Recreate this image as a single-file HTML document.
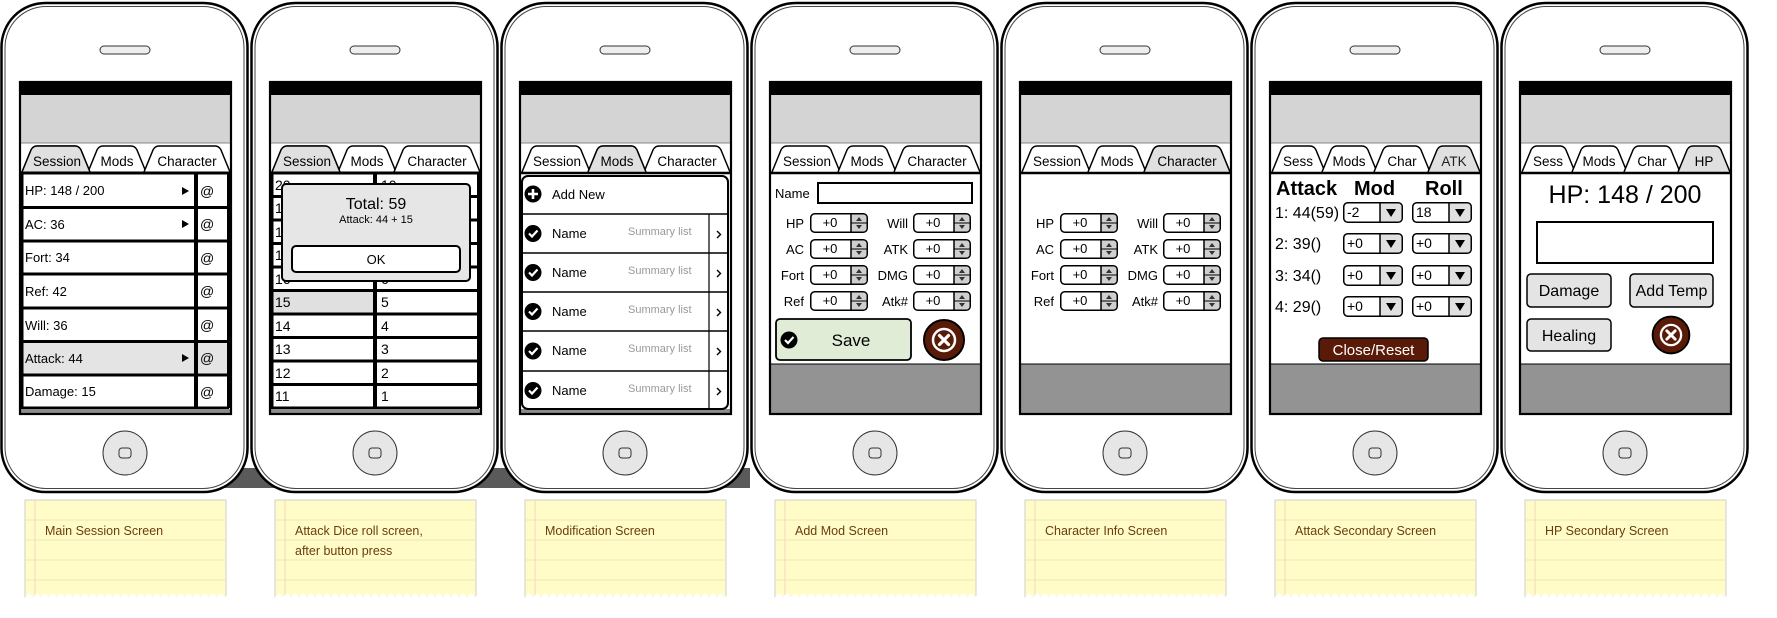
<!DOCTYPE html>
<html><head><meta charset="utf-8"><style>
html,body{margin:0;padding:0;background:#fff;width:1777px;height:618px;overflow:hidden}
svg{display:block;font-family:"Liberation Sans",Arial,sans-serif}
</style></head><body>
<svg width="1777" height="618" viewBox="0 0 1777 618" xmlns="http://www.w3.org/2000/svg">
<defs>
<symbol id="phone" overflow="visible">
<rect x="1.5" y="3" width="246" height="489" rx="44" fill="#fff" stroke="#000" stroke-width="2.5"/>
<rect x="5" y="6.5" width="239" height="482" rx="41" fill="none" stroke="#444" stroke-width="1"/>
<rect x="100" y="46" width="50" height="8" rx="4" fill="#eee" stroke="#333" stroke-width="1"/>
<rect x="19" y="81" width="213" height="333" fill="#fff"/>
<rect x="19" y="81" width="213" height="14" fill="#000"/>
<rect x="21" y="95" width="209" height="48" fill="#d4d4d4"/>
<line x1="21" y1="143" x2="230" y2="143" stroke="#888" stroke-width="1"/>
<ellipse cx="125" cy="453" rx="22" ry="22" fill="#e6e6e6" stroke="#333" stroke-width="1"/>
<rect x="119" y="448" width="12" height="10" rx="3" fill="none" stroke="#333" stroke-width="1"/>
</symbol>
<symbol id="spin" overflow="visible">
<rect x="0.75" y="0.75" width="56.5" height="18.5" rx="4" fill="#fff" stroke="#000" stroke-width="1.5"/>
<path d="M41 1.5 H53 a3.5 3.5 0 0 1 3.5 3.5 V15 a3.5 3.5 0 0 1 -3.5 3.5 H41 Z" fill="#cfcfcf"/>
<line x1="41" y1="1" x2="41" y2="19" stroke="#000" stroke-width="1.5"/>
<line x1="41" y1="10" x2="57" y2="10" stroke="#000" stroke-width="1"/>
<polygon points="46,8 52,8 49,4" fill="#333"/>
<polygon points="46,12 52,12 49,16" fill="#333"/>
</symbol>
<symbol id="dd" overflow="visible">
<rect x="0.75" y="0.75" width="58.5" height="19.5" rx="4" fill="#fff" stroke="#000" stroke-width="1.5"/>
<path d="M37 1.5 H55 a3.5 3.5 0 0 1 3.5 3.5 V16 a3.5 3.5 0 0 1 -3.5 3.5 H37 Z" fill="#e0e0e0"/>
<line x1="37" y1="1" x2="37" y2="20" stroke="#000" stroke-width="1.5"/>
<polygon points="43,7 53,7 48,15" fill="#000"/>
</symbol>
<symbol id="cancel" overflow="visible">
<circle cx="0" cy="0" r="20" fill="#5a1a08" stroke="#000" stroke-width="2"/>
<circle cx="0" cy="0" r="11" fill="none" stroke="#fff" stroke-width="2.5"/>
<path d="M-4.5 -4.5 L4.5 4.5 M4.5 -4.5 L-4.5 4.5" stroke="#fff" stroke-width="3.2" stroke-linecap="round"/>
</symbol>
<symbol id="chk" overflow="visible">
<circle cx="0" cy="0" r="8.5" fill="#000"/>
<path d="M-4 0 L-1 3 L4.5 -3" fill="none" stroke="#fff" stroke-width="2.2"/>
</symbol>
<symbol id="tabs3" overflow="visible">
<path d="M22 172 L31 150 Q33 146 37 146 L75 146 Q79 146 81 150 L90 172" fill="#fff" stroke="#000" stroke-width="1.5"/>
<path d="M88 172 L97 150 Q99 146 103 146 L131 146 Q135 146 137 150 L146 172" fill="#fff" stroke="#000" stroke-width="1.5"/>
<path d="M144 172 L153 150 Q155 146 159 146 L215 146 Q219 146 221 150 L230 172" fill="#fff" stroke="#000" stroke-width="1.5"/>
</symbol>
<symbol id="tabs4" overflow="visible">
<path d="M22 172 L31 150 Q33 146 37 146 L60 146 Q64 146 66 150 L75 172" fill="#fff" stroke="#000" stroke-width="1.5"/>
<path d="M72 172 L81 150 Q83 146 87 146 L112 146 Q116 146 118 150 L127 172" fill="#fff" stroke="#000" stroke-width="1.5"/>
<path d="M124 172 L133 150 Q135 146 139 146 L165 146 Q169 146 171 150 L180 172" fill="#fff" stroke="#000" stroke-width="1.5"/>
<path d="M178 172 L187 150 Q189 146 193 146 L215 146 Q219 146 221 150 L230 172" fill="#e0e0e0" stroke="#000" stroke-width="1.5"/>
</symbol>
<symbol id="note" overflow="visible">
<rect x="0" y="0" width="201" height="97" fill="#fffcc8" stroke="#cfcfcf" stroke-width="1"/>
<path d="M0 20 H201 M0 40 H201 M0 60 H201 M0 80 H201" stroke="#ece6b4" stroke-width="1"/>
<line x1="10" y1="0" x2="10" y2="97" stroke="#f3d8c0" stroke-width="1"/>
<path d="M0 97 l4 -4 l4 4 l4 -4 l4 4 l4 -4 l4 4 l4 -4 l4 4 l4 -4 l4 4 l4 -4 l4 4 l4 -4 l4 4 l4 -4 l4 4 l4 -4 l4 4 l4 -4 l4 4 l4 -4 l4 4 l4 -4 l4 4 l4 -4 l4 4 l4 -4 l4 4 l4 -4 l4 4 l4 -4 l4 4 l4 -4 l4 4 l4 -4 l4 4 l4 -4 l4 4 l4 -4 l4 4 l4 -4 l4 4 l4 -4 l4 4 l4 -4 l4 4 l4 -4 l4 4 l4 -4 l4 4 l4 -4 l1 1 V100 H0Z" fill="#fff"/>
</symbol>
</defs>

<rect x="210" y="468" width="540" height="20" fill="#5a5a5a"/>

<!-- PHONE 1 -->
<g transform="translate(0,0)">
<use href="#phone"/>
<use href="#tabs3"/>
<path d="M22 172 L31 150 Q33 146 37 146 L75 146 Q79 146 81 150 L90 172" fill="#e0e0e0" stroke="#000" stroke-width="1.5"/>
<g font-size="13.5" text-anchor="middle"><text x="57" y="166">Session</text><text x="117" y="166">Mods</text><text x="187" y="166">Character</text></g>
<rect x="21" y="341.5" width="208" height="33.5" fill="#e4e4e4"/>
<g stroke="#000" stroke-width="3">
<path d="M19 173 H232 M21 207.5 H229 M21 241 H229 M21 274 H229 M21 308 H229 M21 341.5 H229 M21 375 H229 M21 408 H229"/>
<path d="M22 173 V408 M228.5 173 V408"/>
</g>
<line x1="196" y1="173" x2="196" y2="408" stroke="#000" stroke-width="4"/>
<rect x="21" y="409" width="209" height="5" fill="#8c8c8c"/>
<g font-size="13">
<text x="25" y="195">HP: 148 / 200</text><text x="25" y="229">AC: 36</text><text x="25" y="262">Fort: 34</text><text x="25" y="296">Ref: 42</text><text x="25" y="330">Will: 36</text><text x="25" y="363">Attack: 44</text><text x="25" y="396">Damage: 15</text>
</g>
<g fill="#000"><polygon points="182,187 189,191 182,195"/><polygon points="182,220 189,224 182,228"/><polygon points="182,354 189,358 182,362"/></g>
<g font-size="14"><text x="200" y="196">@</text><text x="200" y="229">@</text><text x="200" y="263">@</text><text x="200" y="296">@</text><text x="200" y="330">@</text><text x="200" y="363">@</text><text x="200" y="397">@</text></g>
<use href="#note" x="25" y="500"/>
<text x="45" y="535" font-size="12.5" fill="#6b3d0e">Main Session Screen</text>
</g>

<!-- PHONE 2 -->
<g transform="translate(250,0)">
<use href="#phone"/>
<use href="#tabs3"/>
<path d="M22 172 L31 150 Q33 146 37 146 L75 146 Q79 146 81 150 L90 172" fill="#e0e0e0" stroke="#000" stroke-width="1.5"/>
<g font-size="13.5" text-anchor="middle"><text x="57" y="166">Session</text><text x="117" y="166">Mods</text><text x="187" y="166">Character</text></g>
<rect x="21" y="290.5" width="104" height="23.5" fill="#e0e0e0"/>
<g stroke="#000" stroke-width="3">
<path d="M19 173 H232 M21 196.5 H229 M21 220 H229 M21 243.5 H229 M21 267 H229 M21 290.5 H229 M21 314 H229 M21 337.5 H229 M21 361 H229 M21 384.5 H229 M21 408 H229"/>
<path d="M22 173 V408 M228.5 173 V408"/>
</g>
<line x1="125" y1="173" x2="125" y2="408" stroke="#000" stroke-width="4"/>
<rect x="21" y="409" width="209" height="5" fill="#8c8c8c"/>
<g font-size="14">
<text x="25" y="190">20</text><text x="25" y="213">19</text><text x="25" y="237">18</text><text x="25" y="260">17</text><text x="25" y="284">16</text><text x="25" y="307">15</text><text x="25" y="331">14</text><text x="25" y="354">13</text><text x="25" y="378">12</text><text x="25" y="401">11</text>
<text x="131" y="190">10</text><text x="131" y="213">9</text><text x="131" y="237">8</text><text x="131" y="260">7</text><text x="131" y="284">6</text><text x="131" y="307">5</text><text x="131" y="331">4</text><text x="131" y="354">3</text><text x="131" y="378">2</text><text x="131" y="401">1</text>
</g>
<rect x="32" y="184" width="188" height="97" rx="4" fill="#e6e6e6" stroke="#000" stroke-width="2"/>
<text x="126" y="209" font-size="16" text-anchor="middle">Total: 59</text>
<text x="126" y="223" font-size="11" text-anchor="middle">Attack: 44 + 15</text>
<rect x="42" y="246" width="168" height="26" rx="4" fill="#fff" stroke="#000" stroke-width="2"/>
<text x="126" y="264" font-size="13" text-anchor="middle">OK</text>
<use href="#note" x="25" y="500"/>
<text x="45" y="535" font-size="12.5" fill="#6b3d0e">Attack Dice roll screen,</text>
<text x="45" y="555" font-size="12.5" fill="#6b3d0e">after button press</text>
</g>

<!-- PHONE 3 -->
<g transform="translate(500,0)">
<use href="#phone"/>
<use href="#tabs3"/>
<path d="M88 172 L97 150 Q99 146 103 146 L131 146 Q135 146 137 150 L146 172" fill="#e0e0e0" stroke="#000" stroke-width="1.5"/>
<g font-size="13.5" text-anchor="middle"><text x="57" y="166">Session</text><text x="117" y="166">Mods</text><text x="187" y="166">Character</text></g>
<line x1="19" y1="173" x2="232" y2="173" stroke="#000" stroke-width="2.5"/>
<rect x="21" y="409" width="209" height="5" fill="#8c8c8c"/>
<rect x="22" y="176" width="206" height="233" rx="6" fill="#fff" stroke="#000" stroke-width="2"/>
<path d="M22 214 H228 M22 253 H228 M22 292 H228 M22 331 H228 M22 371 H228" stroke="#000" stroke-width="1.5"/>
<line x1="209" y1="214" x2="209" y2="409" stroke="#000" stroke-width="1.2"/>
<circle cx="33" cy="194" r="8.5" fill="#000"/>
<path d="M28 194 H38 M33 189 V199" stroke="#fff" stroke-width="2.6"/>
<text x="52" y="199" font-size="13">Add New</text>
<use href="#chk" x="33" y="233.5"/><use href="#chk" x="33" y="272.5"/><use href="#chk" x="33" y="311.5"/><use href="#chk" x="33" y="351"/><use href="#chk" x="33" y="390.5"/>
<g font-size="13"><text x="52" y="238">Name</text><text x="52" y="277">Name</text><text x="52" y="316">Name</text><text x="52" y="355">Name</text><text x="52" y="395">Name</text></g>
<g font-size="11" fill="#999"><text x="128" y="235">Summary list</text><text x="128" y="274">Summary list</text><text x="128" y="313">Summary list</text><text x="128" y="352">Summary list</text><text x="128" y="392">Summary list</text></g>
<g fill="none" stroke="#000" stroke-width="1.4"><path d="M217 231 l3.5 3.5 l-3.5 3.5"/><path d="M217 270 l3.5 3.5 l-3.5 3.5"/><path d="M217 309 l3.5 3.5 l-3.5 3.5"/><path d="M217 348 l3.5 3.5 l-3.5 3.5"/><path d="M217 388 l3.5 3.5 l-3.5 3.5"/></g>
<use href="#note" x="25" y="500"/>
<text x="45" y="535" font-size="12.5" fill="#6b3d0e">Modification Screen</text>
</g>

<!-- PHONE 4 -->
<g transform="translate(750,0)">
<use href="#phone"/>
<use href="#tabs3"/>
<g font-size="13.5" text-anchor="middle"><text x="57" y="166">Session</text><text x="117" y="166">Mods</text><text x="187" y="166">Character</text></g>
<line x1="19" y1="173" x2="232" y2="173" stroke="#000" stroke-width="2.5"/>
<rect x="21" y="364" width="209" height="50" fill="#939393"/>
<line x1="21" y1="364" x2="230" y2="364" stroke="#000" stroke-width="1"/>
<text x="25" y="198" font-size="13">Name</text>
<rect x="68" y="183" width="154" height="20" fill="#fff" stroke="#000" stroke-width="2"/>
<use href="#spin" x="60" y="213"/><use href="#spin" x="60" y="239"/><use href="#spin" x="60" y="265"/><use href="#spin" x="60" y="291"/>
<use href="#spin" x="163" y="213"/><use href="#spin" x="163" y="239"/><use href="#spin" x="163" y="265"/><use href="#spin" x="163" y="291"/>
<g font-size="13" text-anchor="end"><text x="54" y="228">HP</text><text x="54" y="254">AC</text><text x="54" y="280">Fort</text><text x="54" y="306">Ref</text>
<text x="158" y="228">Will</text><text x="158" y="254">ATK</text><text x="158" y="280">DMG</text><text x="158" y="306">Atk#</text></g>
<g font-size="13" text-anchor="middle"><text x="80" y="227">+0</text><text x="80" y="253">+0</text><text x="80" y="279">+0</text><text x="80" y="305">+0</text>
<text x="183" y="227">+0</text><text x="183" y="253">+0</text><text x="183" y="279">+0</text><text x="183" y="305">+0</text></g>
<rect x="26" y="319" width="135" height="41" rx="4" fill="#e1ecd7" stroke="#000" stroke-width="1.8"/>
<use href="#chk" x="39" y="340"/>
<text x="101" y="346" font-size="17" text-anchor="middle">Save</text>
<use href="#cancel" x="194" y="340"/>
<use href="#note" x="25" y="500"/>
<text x="45" y="535" font-size="12.5" fill="#6b3d0e">Add Mod Screen</text>
</g>

<!-- PHONE 5 -->
<g transform="translate(1000,0)">
<use href="#phone"/>
<use href="#tabs3"/>
<path d="M144 172 L153 150 Q155 146 159 146 L215 146 Q219 146 221 150 L230 172" fill="#e0e0e0" stroke="#000" stroke-width="1.5"/>
<g font-size="13.5" text-anchor="middle"><text x="57" y="166">Session</text><text x="117" y="166">Mods</text><text x="187" y="166">Character</text></g>
<line x1="19" y1="173" x2="232" y2="173" stroke="#000" stroke-width="2.5"/>
<rect x="21" y="364" width="209" height="50" fill="#939393"/>
<line x1="21" y1="364" x2="230" y2="364" stroke="#000" stroke-width="1"/>
<use href="#spin" x="60" y="213"/><use href="#spin" x="60" y="239"/><use href="#spin" x="60" y="265"/><use href="#spin" x="60" y="291"/>
<use href="#spin" x="163" y="213"/><use href="#spin" x="163" y="239"/><use href="#spin" x="163" y="265"/><use href="#spin" x="163" y="291"/>
<g font-size="13" text-anchor="end"><text x="54" y="228">HP</text><text x="54" y="254">AC</text><text x="54" y="280">Fort</text><text x="54" y="306">Ref</text>
<text x="158" y="228">Will</text><text x="158" y="254">ATK</text><text x="158" y="280">DMG</text><text x="158" y="306">Atk#</text></g>
<g font-size="13" text-anchor="middle"><text x="80" y="227">+0</text><text x="80" y="253">+0</text><text x="80" y="279">+0</text><text x="80" y="305">+0</text>
<text x="183" y="227">+0</text><text x="183" y="253">+0</text><text x="183" y="279">+0</text><text x="183" y="305">+0</text></g>
<use href="#note" x="25" y="500"/>
<text x="45" y="535" font-size="12.5" fill="#6b3d0e">Character Info Screen</text>
</g>

<!-- PHONE 6 -->
<g transform="translate(1250,0)">
<use href="#phone"/>
<use href="#tabs4"/>
<g font-size="13.5" text-anchor="middle"><text x="48" y="166">Sess</text><text x="99" y="166">Mods</text><text x="152" y="166">Char</text><text x="204" y="166" fill="#222">ATK</text></g>
<line x1="19" y1="173" x2="232" y2="173" stroke="#000" stroke-width="2.5"/>
<rect x="21" y="364" width="209" height="50" fill="#939393"/>
<line x1="21" y1="364" x2="230" y2="364" stroke="#000" stroke-width="1"/>
<g font-size="20" font-weight="bold"><text x="26" y="195">Attack</text><text x="104" y="195">Mod</text><text x="175" y="195">Roll</text></g>
<g font-size="16"><text x="25" y="218">1: 44(59)</text><text x="25" y="249">2: 39()</text><text x="25" y="281">3: 34()</text><text x="25" y="312">4: 29()</text></g>
<use href="#dd" x="93" y="202"/><use href="#dd" x="93" y="233"/><use href="#dd" x="93" y="265"/><use href="#dd" x="93" y="296"/>
<use href="#dd" x="162" y="202"/><use href="#dd" x="162" y="233"/><use href="#dd" x="162" y="265"/><use href="#dd" x="162" y="296"/>
<g font-size="14"><text x="97" y="217">-2</text><text x="97" y="248">+0</text><text x="97" y="280">+0</text><text x="97" y="311">+0</text>
<text x="166" y="217">18</text><text x="166" y="248">+0</text><text x="166" y="280">+0</text><text x="166" y="311">+0</text></g>
<rect x="69" y="338" width="109" height="23" rx="4" fill="#5a1a08" stroke="#000" stroke-width="1.5"/>
<text x="123.5" y="355" font-size="15" fill="#fff" text-anchor="middle">Close/Reset</text>
<use href="#note" x="25" y="500"/>
<text x="45" y="535" font-size="12.5" fill="#6b3d0e">Attack Secondary Screen</text>
</g>

<!-- PHONE 7 -->
<g transform="translate(1500,0)">
<use href="#phone"/>
<use href="#tabs4"/>
<g font-size="13.5" text-anchor="middle"><text x="48" y="166">Sess</text><text x="99" y="166">Mods</text><text x="152" y="166">Char</text><text x="204" y="166">HP</text></g>
<line x1="19" y1="173" x2="232" y2="173" stroke="#000" stroke-width="2.5"/>
<rect x="21" y="364" width="209" height="50" fill="#939393"/>
<line x1="21" y1="364" x2="230" y2="364" stroke="#000" stroke-width="1"/>
<text x="125" y="203" font-size="25" text-anchor="middle">HP: 148 / 200</text>
<rect x="37" y="222" width="176" height="41" fill="#fff" stroke="#000" stroke-width="2"/>
<rect x="27" y="274" width="84" height="33" rx="4" fill="#e4e4e4" stroke="#000" stroke-width="1.5"/>
<rect x="130" y="274" width="83" height="33" rx="4" fill="#e4e4e4" stroke="#000" stroke-width="1.5"/>
<rect x="27" y="319" width="84" height="32" rx="4" fill="#e4e4e4" stroke="#000" stroke-width="1.5"/>
<g font-size="16" text-anchor="middle"><text x="69" y="296">Damage</text><text x="171.5" y="296">Add Temp</text><text x="69" y="341">Healing</text></g>
<use href="#cancel" x="171" y="335" transform="translate(171,335) scale(0.92) translate(-171,-335)"/>
<use href="#note" x="25" y="500"/>
<text x="45" y="535" font-size="12.5" fill="#6b3d0e">HP Secondary Screen</text>
</g>

<!-- screen borders -->
<g fill="none" stroke="#000" stroke-width="2.2">
<rect x="20" y="82" width="211" height="332"/>
<rect x="270" y="82" width="211" height="332"/>
<rect x="520" y="82" width="211" height="332"/>
<rect x="770" y="82" width="211" height="332"/>
<rect x="1020" y="82" width="211" height="332"/>
<rect x="1270" y="82" width="211" height="332"/>
<rect x="1520" y="82" width="211" height="332"/>
</g>
</svg>
</body></html>
